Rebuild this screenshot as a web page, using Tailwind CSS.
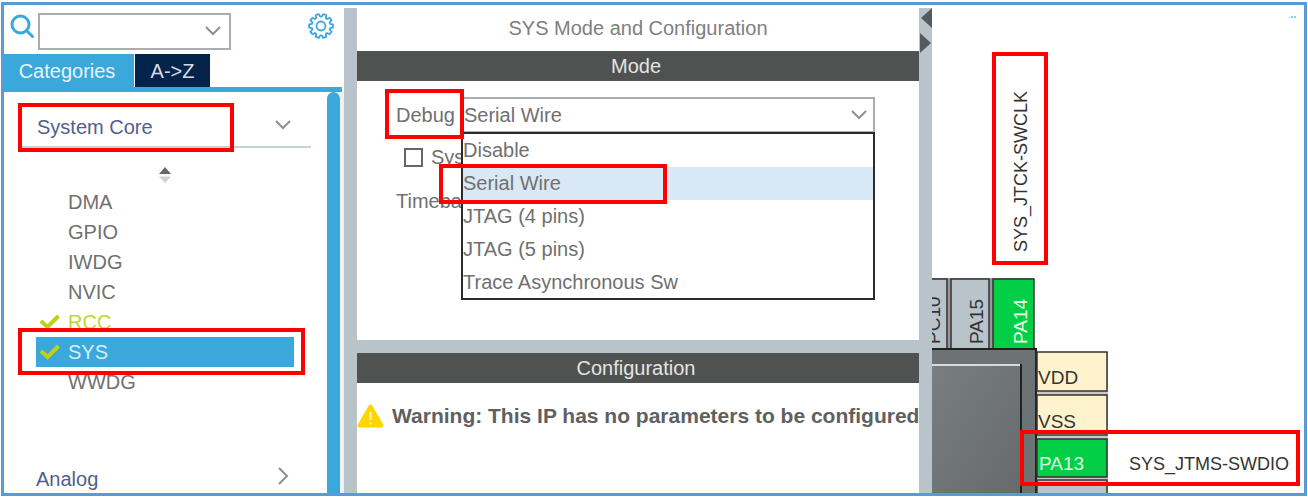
<!DOCTYPE html>
<html lang="en">

<head>
    <meta charset="UTF-8">
    <meta name="viewport" content="width=device-width, initial-scale=1.0">
    <title>SYS Mode and Configuration</title>
    <script src="https://cdn.jsdelivr.net/npm/@tailwindcss/browser@4"></script>
</head>

<body class="h-screen overflow-hidden bg-white pt-0.5 px-px pb-[3px] font-['Liberation_Sans',Arial,sans-serif] text-xl text-[#707070]">
    <div class="h-full flex border-[3px] border-[#5b9bd5] overflow-hidden">

        <!-- Categories -->
        <aside class="w-[340px] shrink-0 flex flex-col">
            <div class="flex items-center pl-1.5 pr-2.5 pt-1 h-[49px]">
                <label for="search" class="w-7 shrink-0 pb-3">
                    <svg class="size-6" viewBox="0 0 24 24" fill="none" stroke="#3ba8dc" stroke-width="3" role="img" aria-label="Search">
                        <circle cx="10.500" cy="10.500" r="8.500" />
                        <path d="M16.500 16.500L22.500 22.500" stroke-linecap="round" />
                    </svg>
                </label>
                <div class="relative w-[193px]">
                    <select id="search" class="appearance-none block w-full h-[37px] border-2 border-[#a9adb3] bg-white px-2">
                        <option></option>
                    </select>
                    <svg class="absolute right-2.5 top-3 w-4 h-3 pointer-events-none" viewBox="0 0 16 12" fill="none" stroke="#8f8f8f" stroke-width="2">
                        <path d="M1 2L8 9L15 2" />
                    </svg>
                </div>
                <button type="button" aria-label="Settings" class="ml-auto pb-3">
                    <svg class="block size-[26px]" viewBox="0 0 26 26" fill="none" stroke="#3ba8dc" stroke-width="1.800" stroke-linejoin="round">
                        <path d="M22.100 10.900L24.900 11.300V14.700L22.100 15.100L21.600 16.600L23.600 18.600L21.600 21.300L19.100 20L17.800 21L18.300 23.800L15.100 24.800L13.800 22.300H12.200L10.900 24.800L7.700 23.800L8.200 21L6.900 20L4.400 21.300L2.400 18.600L4.400 16.600L3.900 15.100L1.100 14.700V11.300L3.900 10.900L4.400 9.400L2.400 7.400L4.400 4.700L6.900 6L8.200 5L7.700 2.200L10.900 1.200L12.200 3.700H13.800L15.100 1.200L18.300 2.200L17.800 5L19.100 6L21.600 4.700L23.600 7.400L21.600 9.400Z" />
                        <circle cx="13" cy="13" r="4.500" />
                    </svg>
                </button>
            </div>

            <nav class="flex gap-px h-[33px]">
                <button type="button" class="w-[130px] pr-1 bg-[#3ba8dc] text-[#e6f5fc]">Categories</button>
                <button type="button" class="w-[75px] bg-[#03234b] text-[#d5dbe3]">A-&gt;Z</button>
            </nav>
            <div class="h-[5px] shrink-0 mr-0.5 bg-[#3ba8dc]"></div>

            <div class="flex-1 flex min-h-0">
                <div class="flex-1 flex flex-col pl-3.5 pr-4">
                    <button type="button" class="relative h-14 shrink-0 flex items-center justify-between border-b-2 border-[#c3d3d6] pl-[19px] pr-5 pt-4 text-[#525e8c]">
                        System Core
                        <svg class="w-4 h-3 mb-1" viewBox="0 0 16 12" fill="none" stroke="#8f8f8f" stroke-width="2">
                            <path d="M1 2L8 9L15 2" />
                        </svg>
                        <span class="absolute left-0 top-[11px] w-[216px] h-[49px] border-4 border-[#ff0000]"></span>
                    </button>
                    <svg class="w-3 h-4 mt-[19px] mb-1 mx-auto shrink-0" viewBox="0 0 12 16">
                        <path d="M6 0L12 7H0z" fill="#666" />
                        <path d="M0 9.500H12L6 16z" fill="#cfcfcf" />
                    </svg>
                    <ul class="relative pl-[18px] pr-[17px] [&>li]:h-[30px] [&>li]:flex [&>li]:items-center [&>li]:pl-8">
                        <li>DMA</li>
                        <li>GPIO</li>
                        <li>IWDG</li>
                        <li>NVIC</li>
                        <li class="relative text-[#c5d62a]">
                            <svg class="absolute left-1 w-5 h-4" viewBox="0 0 20 16" fill="none" stroke="#bfd117" stroke-width="4">
                                <path d="M1 7L7.500 13L18.500 2" />
                            </svg>
                            RCC
                        </li>
                        <li class="relative bg-[#3ba8dc] text-[#d6eefa]">
                            <svg class="absolute left-1 w-5 h-4" viewBox="0 0 20 16" fill="none" stroke="#bfd117" stroke-width="4">
                                <path d="M1 7L7.500 13L18.500 2" />
                            </svg>
                            SYS
                        </li>
                        <li>WWDG</li>
                        <li class="absolute left-0 right-1.5 top-[141px] h-[47px]! border-4 border-[#ff0000]" aria-hidden="true"></li>
                    </ul>
                    <button type="button" class="mt-auto flex items-center justify-between pl-[18px] pr-[22px] text-[#525e8c]">
                        Analog
                        <svg class="w-3 h-[18px] mb-1.5" viewBox="0 0 12 18" fill="none" stroke="#8f8f8f" stroke-width="2">
                            <path d="M2 1L10 9L2 17" />
                        </svg>
                    </button>
                </div>
                <div class="w-[13px] bg-[#3ba8dc] rounded-t-full"></div>
                <div class="w-1 bg-[#eef1f4]"></div>
            </div>
        </aside>

        <div class="w-[13px] shrink-0 mt-[3px] bg-[#b9c4ca]"></div>

        <!-- Mode and Configuration -->
        <main class="flex-1 min-w-0 flex flex-col">
            <h1 class="h-[46px] flex items-center justify-center text-[#808080]">SYS Mode and Configuration</h1>
            <h2 class="h-[30px] pr-1 flex items-center justify-center bg-[#4f5250] text-[#e4e4e4]">Mode</h2>
            <section class="relative h-[259px] pl-[39px] pr-11 pt-4">
                <div class="flex items-center h-9">
                    <label for="debug" class="w-[66px] shrink-0">Debug</label>
                    <div class="relative flex-1">
                        <select id="debug" class="appearance-none block w-full h-9 border-2 border-[#a9adb3] bg-white">
                            <option>Serial Wire</option>
                        </select>
                        <svg class="absolute right-2 top-3 w-4 h-3 pointer-events-none" viewBox="0 0 16 12" fill="none" stroke="#8f8f8f" stroke-width="2">
                            <path d="M1 2L8 9L15 2" />
                        </svg>
                        <ul class="absolute -left-px right-0 top-[35px] h-[168px] border-2 border-[#2b2b2b] bg-white [&>li]:h-[33px] [&>li]:flex [&>li]:items-center [&>li]:pb-0.5">
                            <li>Disable</li>
                            <li class="bg-[#d9e8f5]">Serial Wire</li>
                            <li>JTAG (4 pins)</li>
                            <li>JTAG (5 pins)</li>
                            <li>Trace Asynchronous Sw</li>
                        </ul>
                    </div>
                </div>
                <div class="flex items-center gap-2 pl-2 mt-2.5">
                    <input id="wakeup" type="checkbox" class="appearance-none size-[19px] border-2 border-[#666]">
                    <label for="wakeup">Sys</label>
                </div>
                <p class="mt-4">Timeba</p>
                <span class="absolute left-7 top-2 w-[79px] h-[50px] border-4 border-[#ff0000]"></span>
                <span class="absolute left-[82px] top-[83px] w-[228px] h-10 border-4 border-[#ff0000]"></span>
            </section>
            <div class="h-[13px] shrink-0 bg-[#b9c4ca]"></div>
            <h2 class="h-[30px] pr-1 shrink-0 flex items-center justify-center bg-[#4f5250] text-[#e4e4e4]">Configuration</h2>
            <p class="flex items-center gap-2 mt-[18px] font-bold text-[21px] text-[#606060] whitespace-nowrap">
                <svg class="w-[27px] h-6 shrink-0" viewBox="0 0 27 24">
                    <path d="M13.500 2.500L24.500 21.500H2.500z" fill="#ffd500" stroke="#ffd500" stroke-width="4" stroke-linejoin="round" />
                    <path d="M13.500 8V16M13.500 18.500V20.500" stroke="#fff6c0" stroke-width="2" />
                </svg>
                Warning: This IP has no parameters to be configured
            </p>
        </main>

        <div class="w-[13px] shrink-0 mt-[3px] bg-[#b9c4ca]">
            <svg class="w-[13px] h-[46px]" viewBox="0 0 13 46" fill="#555a5c">
                <path d="M13 0V20L2 10z" />
                <path d="M1 25V45L12 35z" />
            </svg>
        </div>

        <!-- Pinout view -->
        <section class="w-[372px] shrink-0 overflow-hidden">
            <svg class="w-[372px] h-[488px]" viewBox="932 5 372 488" font-size="19" fill="#333">
                <defs>
                    <linearGradient id="chip" x1="0" y1="0" x2="1" y2="1">
                        <stop offset="0" stop-color="#787e81" />
                        <stop offset="1" stop-color="#66696b" />
                    </linearGradient>
                </defs>
                <g fill="#8ecbea">
                    <rect x="1289" y="17" width="1" height="1" />
                    <rect x="1291" y="16" width="2" height="2" />
                    <rect x="1294" y="16" width="2" height="2" />
                </g>

                <!-- top pins -->
                <rect x="932" y="278" width="102" height="72" fill="#97999a" />
                <g stroke="#333" stroke-width="1.500">
                    <rect x="920" y="279" width="27" height="70" fill="#b9c4ca" />
                    <rect x="951" y="279" width="38" height="70" fill="#b9c4ca" />
                    <rect x="993" y="279" width="41" height="70" fill="#02cf45" />
                </g>
                <text transform="translate(940 344) rotate(-90)">PC10</text>
                <text transform="translate(983 344) rotate(-90)">PA15</text>
                <text transform="translate(1027 344) rotate(-90)" fill="#e8ffe8">PA14</text>
                <text transform="translate(1027 252) rotate(-90)" font-size="18">SYS_JTCK-SWCLK</text>

                <!-- package body -->
                <rect x="900" y="349" width="136" height="160" fill="#6d7275" stroke="#222" stroke-width="2" />
                <rect x="932" y="365" width="89" height="140" fill="url(#chip)" />
                <path d="M932 365H1020" stroke="#d8dadb" stroke-width="2" />
                <path d="M1021 364V493" stroke="#222" stroke-width="2" />

                <!-- right pins -->
                <rect x="1037" y="352" width="71" height="141" fill="#c9c9c9" />
                <g stroke="#333" stroke-width="1.500">
                    <rect x="1037" y="352" width="70" height="39" fill="#fff3cd" />
                    <rect x="1037" y="395" width="70" height="40" fill="#fff3cd" />
                    <rect x="1037" y="439" width="70" height="38" fill="#02cf45" />
                    <rect x="1037" y="480" width="70" height="30" fill="#b9c4ca" />
                </g>
                <text x="1038" y="384">VDD</text>
                <text x="1038" y="428">VSS</text>
                <text x="1039" y="470" fill="#d8ffe0">PA13</text>
                <text x="1129" y="470" font-size="18">SYS_JTMS-SWDIO</text>

                <g fill="none" stroke="#ff0000" stroke-width="4">
                    <rect x="994" y="54" width="52" height="209" />
                    <rect x="1022" y="432" width="276" height="52" />
                </g>
            </svg>
        </section>
    </div>
</body>

</html>
